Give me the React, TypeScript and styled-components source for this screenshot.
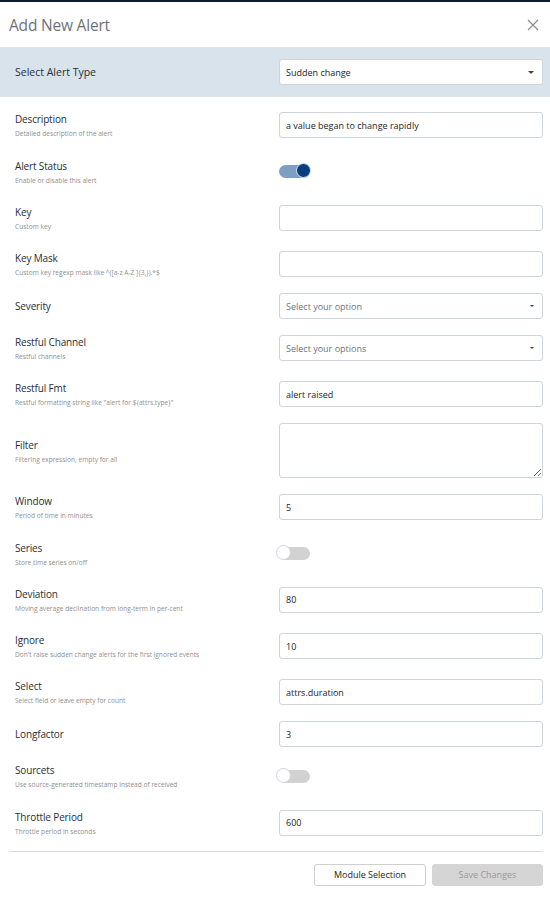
import React from "react";
import styled, { createGlobalStyle } from "styled-components";

const GlobalStyle = createGlobalStyle`
  html, body {
    margin: 0;
    padding: 0;
    background: #ffffff;
  }
  body {
    font-family: "Open Sans", "Noto Sans", sans-serif;
    color: #212529;
  }
`;

const Modal = styled.div`
  width: 550px;
  min-height: 897px;
  border-top: 2px solid #0c1b2d;
  box-sizing: border-box;
  background: #fff;
`;

const Header = styled.div`
  display: flex;
  align-items: center;
  justify-content: space-between;
  height: 45px;
  padding: 0 11px 0 9px;
`;

const Title = styled.h2`
  margin: 0;
  font-size: 15.5px;
  font-weight: 400;
  color: #6f7379;
  letter-spacing: -0.2px;
`;

const CloseButton = styled.button`
  border: 0;
  background: none;
  padding: 0;
  width: 12px;
  height: 12px;
  display: flex;
  cursor: pointer;
`;

const TypeBand = styled.div`
  display: grid;
  grid-template-columns: 1fr 264px;
  align-items: center;
  height: 50px;
  padding: 0 7px 0 15px;
  background: #d9e3eb;
`;

const BandLabel = styled.span`
  font-size: 10.5px;
  color: #2a2e33;
`;

const Body = styled.div`
  display: flex;
  flex-direction: column;
  gap: 11.75px;
  padding: 11px 7px 11px 15px;
`;

const Row = styled.div`
  display: grid;
  grid-template-columns: 1fr 264px;
  align-items: center;
  min-height: 26px;
`;

const LabelBlock = styled.div<{ $withDesc: boolean }>`
  display: flex;
  flex-direction: column;
  gap: 3px;
  padding-top: ${(p) => (p.$withDesc ? "1px" : "0")};
  box-sizing: border-box;
  height: ${(p) => (p.$withDesc ? "34.5px" : "auto")};
  justify-content: center;
`;

const Label = styled.span`
  font-size: 10px;
  line-height: 13px;
  color: #2a2e33;
  letter-spacing: -0.15px;
`;

const Desc = styled.span`
  font-size: 6.6px;
  line-height: 9px;
  color: #8f8f8f;
`;

const fieldBase = `
  box-sizing: border-box;
  width: 264px;
  border: 1px solid #ced4da;
  border-radius: 3px;
  background: #fff;
  font-family: "Open Sans", "Noto Sans", sans-serif;
  font-size: 9px;
  color: #212529;
  padding: 0 6px;
`;

const TextInput = styled.input`
  ${fieldBase}
  height: 26px;
  outline: none;
`;

const TextArea = styled.textarea`
  ${fieldBase}
  height: 55px;
  padding: 5px 6px;
  resize: vertical;
  outline: none;
`;

const SelectBox = styled.div<{ $placeholder?: boolean }>`
  ${fieldBase}
  height: 26px;
  display: flex;
  align-items: center;
  justify-content: space-between;
  color: ${(p) => (p.$placeholder ? "#6c757d" : "#212529")};
`;

const Caret = styled.span<{ $big?: boolean }>`
  width: 0;
  height: 0;
  border-left: ${(p) => (p.$big ? 3 : 2)}px solid transparent;
  border-right: ${(p) => (p.$big ? 3 : 2)}px solid transparent;
  border-top: ${(p) => (p.$big ? 3.5 : 2.5)}px solid #444;
  margin-right: 2px;
`;

const SwitchTrack = styled.div<{ $on: boolean }>`
  position: relative;
  width: 31px;
  height: 13px;
  border-radius: 7px;
  background: ${(p) => (p.$on ? "#7e9fc1" : "#d2d2d2")};
`;

const SwitchKnob = styled.span<{ $on: boolean }>`
  position: absolute;
  top: -2px;
  left: ${(p) => (p.$on ? "17px" : "-3px")};
  width: 15px;
  height: 15px;
  border-radius: 50%;
  box-sizing: border-box;
  background: ${(p) => (p.$on ? "#083f82" : "#ffffff")};
  border: 1px solid ${(p) => (p.$on ? "#dbe4ee" : "#cfd4da")};
`;

const Divider = styled.hr`
  margin: 0 7px 0 9px;
  border: 0;
  border-top: 1px solid #dcdcdc;
`;

const Footer = styled.div`
  display: flex;
  justify-content: flex-end;
  gap: 6px;
  padding: 12px 7px 0 0;
`;

const Button = styled.button<{ $disabled?: boolean }>`
  box-sizing: border-box;
  width: ${(p) => (p.$disabled ? "111px" : "112px")};
  height: 22px;
  border-radius: 3px;
  font-family: "Open Sans", "Noto Sans", sans-serif;
  font-size: 9px;
  border: 1px solid ${(p) => (p.$disabled ? "#d5d5d5" : "#cfcfcf")};
  background: ${(p) => (p.$disabled ? "#d5d5d5" : "#ffffff")};
  color: ${(p) => (p.$disabled ? "#9a9a9a" : "#212529")};
`;

type Field =
  | { kind: "input"; label: string; desc?: string; value: string }
  | { kind: "select"; label: string; desc?: string; value: string; placeholder?: boolean }
  | { kind: "switch"; label: string; desc?: string; on: boolean }
  | { kind: "textarea"; label: string; desc?: string; value: string };

const fields: Field[] = [
  { kind: "input", label: "Description", desc: "Detailed description of the alert", value: "a value began to change rapidly" },
  { kind: "switch", label: "Alert Status", desc: "Enable or disable this alert", on: true },
  { kind: "input", label: "Key", desc: "Custom key", value: "" },
  { kind: "input", label: "Key Mask", desc: "Custom key regexp mask like ^([a-z A-Z ]{3,}).*$", value: "" },
  { kind: "select", label: "Severity", value: "Select your option", placeholder: true },
  { kind: "select", label: "Restful Channel", desc: "Restful channels", value: "Select your options", placeholder: true },
  { kind: "input", label: "Restful Fmt", desc: 'Restful formatting string like "alert for ${attrs.type}"', value: "alert raised" },
  { kind: "textarea", label: "Filter", desc: "Filtering expression, empty for all", value: "" },
  { kind: "input", label: "Window", desc: "Period of time in minutes", value: "5" },
  { kind: "switch", label: "Series", desc: "Store time series on/off", on: false },
  { kind: "input", label: "Deviation", desc: "Moving average declination from long-term in per-cent", value: "80" },
  { kind: "input", label: "Ignore", desc: "Don't raise sudden change alerts for the first ignored events", value: "10" },
  { kind: "input", label: "Select", desc: "Select field or leave empty for count", value: "attrs.duration" },
  { kind: "input", label: "Longfactor", value: "3" },
  { kind: "switch", label: "Sourcets", desc: "Use source-generated timestamp instead of received", on: false },
  { kind: "input", label: "Throttle Period", desc: "Throttle period in seconds", value: "600" },
];

const Control: React.FC<{ field: Field }> = ({ field }) => {
  switch (field.kind) {
    case "input":
      return <TextInput defaultValue={field.value} />;
    case "textarea":
      return <TextArea defaultValue={field.value} />;
    case "select":
      return (
        <SelectBox $placeholder={field.placeholder}>
          {field.value}
          <Caret />
        </SelectBox>
      );
    case "switch":
      return (
        <SwitchTrack $on={field.on}>
          <SwitchKnob $on={field.on} />
        </SwitchTrack>
      );
  }
};

const App: React.FC = () => {
  return (
    <>
      <GlobalStyle />
      <Modal>
        <Header>
          <Title>Add New Alert</Title>
          <CloseButton aria-label="Close">
            <svg width="12" height="12" viewBox="0 0 12 12">
              <path d="M1 1 L11 11 M11 1 L1 11" stroke="#8a8a8a" strokeWidth="1.1" fill="none" />
            </svg>
          </CloseButton>
        </Header>
        <TypeBand>
          <BandLabel>Select Alert Type</BandLabel>
          <SelectBox>
            Sudden change
            <Caret $big />
          </SelectBox>
        </TypeBand>
        <Body>
          {fields.map((f) => (
            <Row key={f.label}>
              <LabelBlock $withDesc={!!f.desc}>
                <Label>{f.label}</Label>
                {f.desc && <Desc>{f.desc}</Desc>}
              </LabelBlock>
              <Control field={f} />
            </Row>
          ))}
        </Body>
        <Divider />
        <Footer>
          <Button>Module Selection</Button>
          <Button $disabled>Save Changes</Button>
        </Footer>
      </Modal>
    </>
  );
};

export default App;
